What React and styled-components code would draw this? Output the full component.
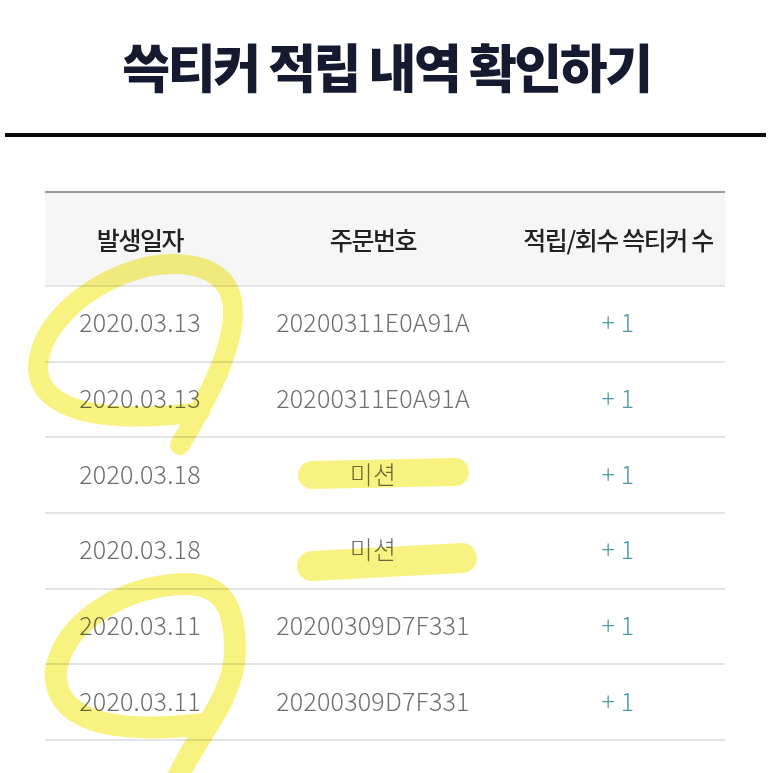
import React from "react";
import styled, { createGlobalStyle } from "styled-components";

const Global = createGlobalStyle`
  html, body { margin: 0; padding: 0; background: #fff; }
  body { font-family: "Noto Sans CJK KR", "Noto Sans", sans-serif; }
`;

const Page = styled.div`
  position: relative;
  width: 773px;
  height: 773px;
  overflow: hidden;
  background: #fff;
`;

const Title = styled.h1`
  margin: 0;
  padding-top: 30px;
  height: 103px;
  box-sizing: border-box;
  text-align: center;
  font-size: 52px;
  font-weight: 900;
  letter-spacing: -2.4px;
  line-height: 72px;
  color: #151a30;
`;

const Rule = styled.div`
  margin: 30px 7px 0 5px;
  height: 4px;
  background: #0a0a0a;
`;

const Table = styled.div`
  margin: 54px 48px 0 45px;
  border-top: 2px solid #9a9a9a;
`;

const Row = styled.div`
  display: grid;
  grid-template-columns: 190px 276px 214px;
  height: ${(p) => (p.$head ? "94px" : "75.7px")};
  background: ${(p) => (p.$head ? "#f6f6f6" : "#fff")};
  border-bottom: 2px solid #e4e4e4;
  box-sizing: border-box;
`;

const Cell = styled.div`
  display: flex;
  align-items: center;
  justify-content: center;
  white-space: nowrap;
  padding-bottom: ${(p) => (p.$head ? "0" : "5px")};
  font-size: 25px;
  font-weight: ${(p) => (p.$head ? 500 : 300)};
  letter-spacing: ${(p) => (p.$head ? "-1.4px" : "0.2px")};
  color: ${(p) => (p.$head ? "#222" : p.$accent ? "#4f9ba6" : "#6e6e6e")};
`;

const Marks = styled.svg`
  position: absolute;
  left: 0;
  top: 0;
  width: 773px;
  height: 773px;
  pointer-events: none;
  mix-blend-mode: multiply;
`;

const rows = [
  ["2020.03.13", "20200311E0A91A", "+ 1"],
  ["2020.03.13", "20200311E0A91A", "+ 1"],
  ["2020.03.18", "미션", "+ 1"],
  ["2020.03.18", "미션", "+ 1"],
  ["2020.03.11", "20200309D7F331", "+ 1"],
  ["2020.03.11", "20200309D7F331", "+ 1"],
];

export default function App() {
  return (
    <Page>
      <Global />
      <Title>쓱티커 적립 내역 확인하기</Title>
      <Rule />
      <Table>
        <Row $head>
          <Cell $head>발생일자</Cell>
          <Cell $head>주문번호</Cell>
          <Cell $head>적립/회수 쓱티커 수</Cell>
        </Row>
        {rows.map((r, i) => (
          <Row key={i}>
            <Cell>{r[0]}</Cell>
            <Cell>{r[1]}</Cell>
            <Cell $accent>{r[2]}</Cell>
          </Row>
        ))}
      </Table>
      <Marks viewBox="0 0 773 773">
        <g fill="none" stroke="#f7f272" strokeLinecap="round" strokeLinejoin="round" opacity="0.9">
          <path
            strokeWidth="20"
            d="M 180 445 C 200 410, 240 345, 232 300 C 225 268, 190 260, 150 266 C 90 280, 42 322, 38 365 C 36 410, 100 425, 200 412"
          />
          <path
            strokeWidth="22"
            d="M 177 780 C 192 740, 235 700, 235 650 C 235 605, 222 583, 182 584 C 122 587, 64 622, 56 670 C 52 720, 110 735, 205 724"
          />
          <path strokeWidth="28" d="M 312 475 L 455 472" />
          <path strokeWidth="30" d="M 312 566 L 462 558" />
        </g>
      </Marks>
    </Page>
  );
}
